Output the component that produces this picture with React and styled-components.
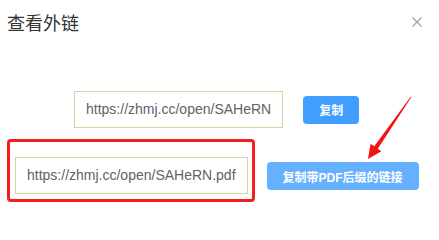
import styled, { createGlobalStyle } from 'styled-components';

const GlobalStyle = createGlobalStyle`
  body {
    margin: 0;
    background: #fff;
    font-family: "Liberation Sans", "Noto Sans CJK SC", sans-serif;
  }
`;

const Dialog = styled.div`
  position: relative;
  width: 439px;
  height: 211px;
  background: #fff;
  overflow: hidden;
`;

const Header = styled.div`
  display: flex;
  align-items: center;
  justify-content: space-between;
  padding: 9px 17px 0 7px;
`;

const Title = styled.span`
  font-size: 18px;
  line-height: 26px;
  color: #333;
  font-family: "Noto Sans CJK SC", sans-serif;
`;

const CloseButton = styled.span`
  display: flex;
  width: 10px;
  height: 10px;
`;

const Row = styled.div`
  display: flex;
  align-items: ${(p) => (p.top ? 'flex-start' : 'center')};
  gap: ${(p) => p.gap}px;
  padding-left: ${(p) => p.left}px;
  margin-top: ${(p) => p.offset}px;
`;

const LinkBox = styled.div`
  box-sizing: border-box;
  height: 37px;
  padding: 0 11px 0 11px;
  border: 1px solid #d6d3a3;
  font-size: 14px;
  line-height: 35px;
  color: #606266;
  white-space: nowrap;
`;

const Highlight = styled.div`
  border: 3px solid #f51c1c;
  border-radius: 4px;
  padding: 15px 4px 5px 5px;
`;

const CopyButton = styled.button`
  height: 28px;
  padding: 0 16px;
  margin-top: ${(p) => p.offset || 0}px;
  border: none;
  border-radius: 4px;
  background: ${(p) => (p.light ? '#66b1ff' : '#409eff')};
  color: #fff;
  font-family: "Liberation Sans", "Noto Sans CJK SC", sans-serif;
  font-size: 12px;
  font-weight: bold;
  cursor: pointer;
`;

const Arrow = styled.svg`
  position: absolute;
  left: 360px;
  top: 92px;
`;

const App = () => (
  <>
    <GlobalStyle />
    <Dialog>
      <Header>
        <Title>查看外链</Title>
        <CloseButton>
          <svg width="10" height="10" viewBox="0 0 10 10">
            <path d="M0.5 0.5L9.5 9.5M9.5 0.5L0.5 9.5" stroke="#a0a0a0" strokeWidth="1.2" />
          </svg>
        </CloseButton>
      </Header>
      <Row gap={20} left={74} offset={56}>
        <LinkBox>https://zhmj.cc/open/SAHeRN</LinkBox>
        <CopyButton>复制</CopyButton>
      </Row>
      <Row top gap={12} left={7} offset={11}>
        <Highlight>
          <LinkBox>https://zhmj.cc/open/SAHeRN.pdf</LinkBox>
        </Highlight>
        <CopyButton light offset={23}>复制带PDF后缀的链接</CopyButton>
      </Row>
      <Arrow width="60" height="72" viewBox="0 0 60 72">
        <polygon
          points="51.3,5.2 17.8,56.8 21.4,59.3 8,67 10.6,51.7 14.3,54.3 50.7,4.8"
          fill="#f21414"
        />
      </Arrow>
    </Dialog>
  </>
);

export default App;
